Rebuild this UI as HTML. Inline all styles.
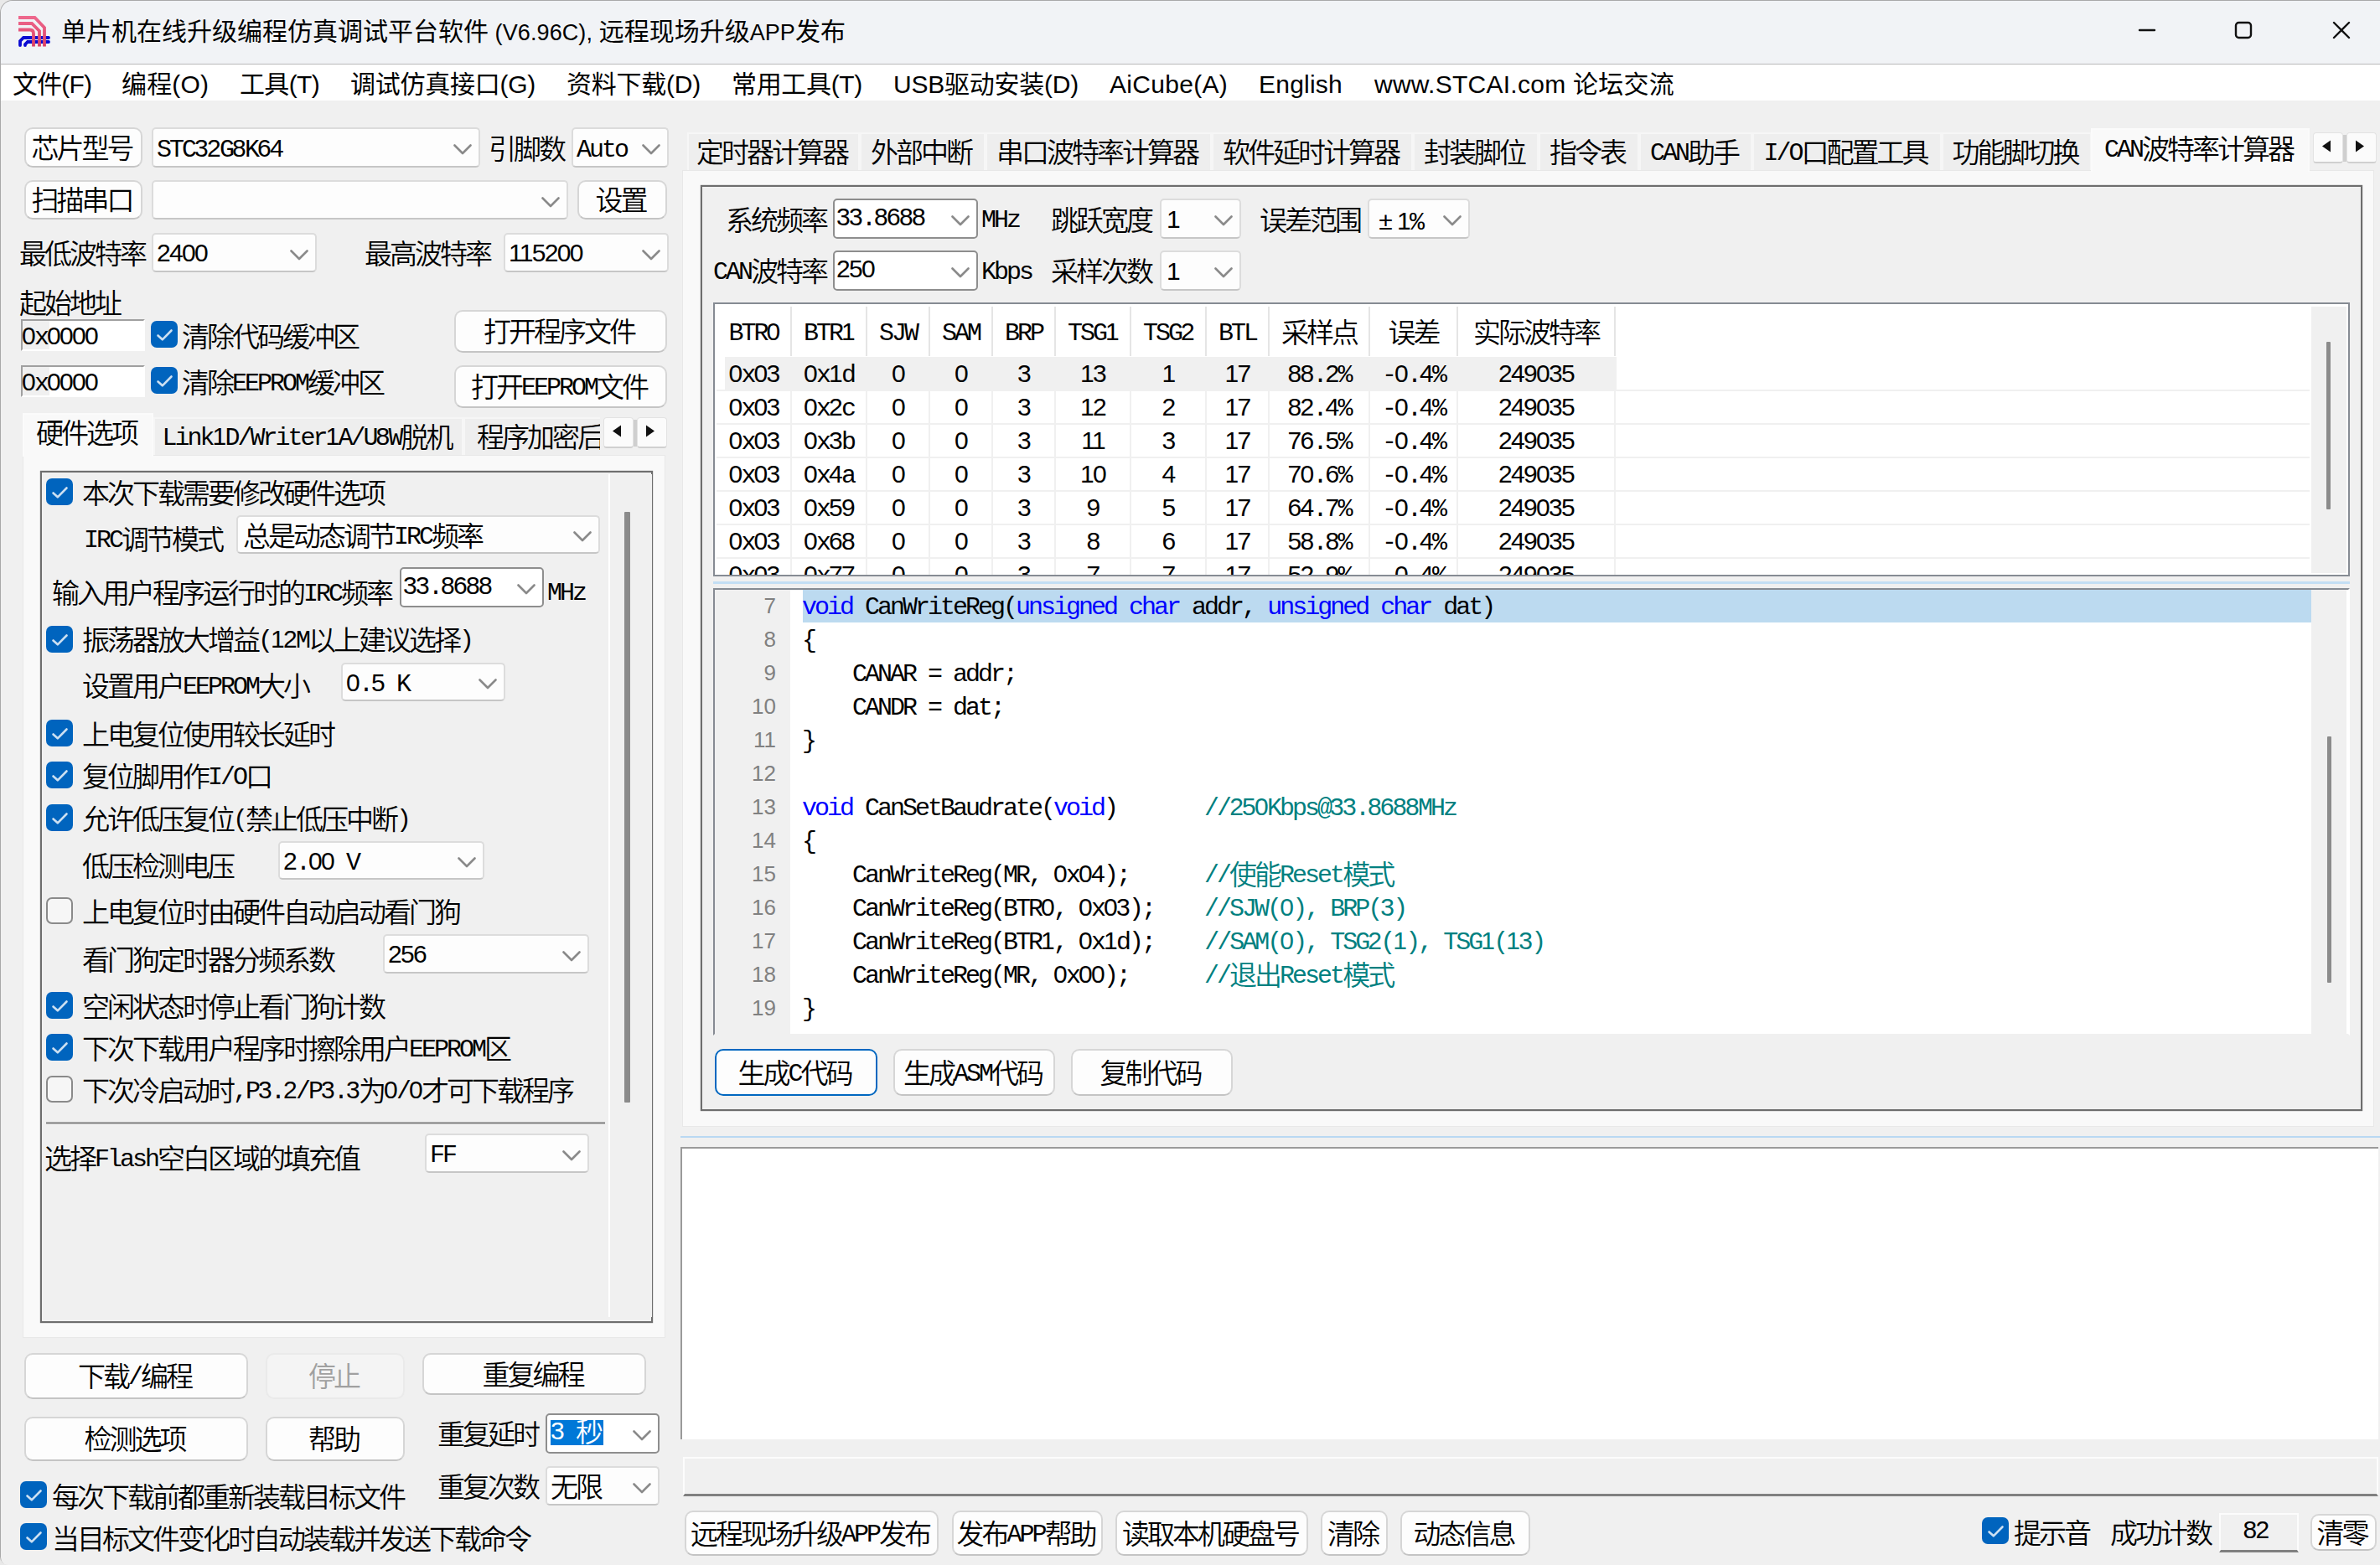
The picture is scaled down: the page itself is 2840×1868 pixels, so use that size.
<!DOCTYPE html>
<html lang="zh-CN"><head><meta charset="utf-8"><title>STC-ISP</title><style>
html,body{margin:0;padding:0}
html{background:#e9e9e9}
body{position:relative;width:2840px;height:1868px;overflow:hidden;background:#f0f0f0;border-radius:15px 0 0 10px;
 font-family:"Liberation Mono","Noto Sans CJK SC",monospace;font-size:33px;font-weight:350;letter-spacing:-3px;color:#000;box-shadow:inset 1px 1px 0 0 #a9a9a9}
div{white-space:pre}
.ui{font-family:"Liberation Sans","Noto Sans CJK SC",sans-serif;font-size:30px;font-weight:400;letter-spacing:0}
#title{position:absolute;left:1px;top:1px;width:2839px;height:75px;background:#f1f3f6;border-bottom:1px solid #b9b9b9;border-radius:14px 0 0 0}
#logo{position:absolute;left:20px;top:18px}
#ttext{position:absolute;left:73px;top:16px;height:44px;line-height:44px}
#menu{position:absolute;left:1px;top:77px;width:2839px;height:43px;background:#fff}
.tl{font-size:27px;letter-spacing:0.1px}
.mi{position:absolute;top:79px;height:44px;line-height:44px}
.t{position:absolute}
.a{font-family:"Liberation Mono",monospace;font-size:30px;position:relative;top:-3px}
.btn{position:absolute;box-sizing:border-box;background:#fdfdfd;border:2px solid #d6d6d6;border-bottom-color:#c4c4c4;border-radius:10px;text-align:center;padding-right:4px}
.btn.dis{color:#a0a0a0;background:#f4f4f4;border-color:#eaeaea}
.btn.def{border-color:#0067c0}
.cbo,.cbe{position:absolute;box-sizing:border-box;background:#fdfdfd;border:2px solid #dcdcdc;border-bottom-color:#c6c6c6;border-radius:5px}
.cbe{background:#fff;border:2px solid #8e8e8e;border-radius:5px}
.cbo i,.cbe i{position:absolute;top:50%;margin-top:-4px;height:13px;line-height:0}
.sel{display:inline-block;height:30px;line-height:35px;overflow:hidden;vertical-align:top;margin-top:6px;margin-left:2px;background:#0078d7;color:#fff;padding-right:3px}
.cb{position:absolute;width:32px;height:32px;box-sizing:border-box;border-radius:7px;border:2px solid #8a8a8a;background:#f6f6f6}
.cb.on{border:none;background:#0064be}
.cb svg{display:block}
.edit{position:absolute;box-sizing:border-box;background:#fff;border:2px solid #a0a0a0;border-right-color:#fff;border-bottom-color:#fff;padding-left:1px}
.edit b{position:absolute;left:0;top:0;width:32px;height:100%;background:#f0f0f0}
.edit>span{position:relative;left:-2px}
.tab{position:absolute;box-sizing:border-box;background:#eeeeee;border:2px solid #f6f6f6;border-bottom:none;text-align:center;overflow:hidden;padding-right:4px}
.tab.tsel{background:#f9f9f9;border-color:#fbfbfb}
.arr{position:absolute;box-sizing:border-box;background:#fbfbfb;border:1px solid #e3e3e3;border-bottom:2px solid #d0d0d0;border-radius:4px}
.arr svg{position:absolute;left:50%;top:50%;margin:-9px 0 0 -8px}
.z{font-family:"Liberation Sans",sans-serif;letter-spacing:-1.7px;line-height:0}
.pm{display:inline-block;width:27px;text-align:center;letter-spacing:0;font-family:"Liberation Sans",sans-serif;font-size:30px;position:relative;top:-3px}
.k{color:#0000ff}.c{color:#008080}
.ln{position:absolute;left:0;width:73px;height:40px;line-height:40px;text-align:right;font-family:"Liberation Sans",sans-serif;font-size:26px;letter-spacing:0;color:#808080}
</style></head><body>
<div id="title"></div>
<svg id="logo" width="40" height="38" viewBox="20 18 40 38">
<g fill="none" stroke-width="3.8" stroke-linejoin="miter">
<g stroke="#0a0ad2" stroke-linecap="round"><path d="M58 45 H28 L24 49 V54"/><path d="M58 50 H33 L30 53 V54"/></g>
<defs><linearGradient id="lg" gradientUnits="userSpaceOnUse" x1="0" y1="19" x2="0" y2="56"><stop offset="0" stop-color="#ee6a8f"/><stop offset="1" stop-color="#dc3e63"/></linearGradient></defs><g stroke="url(#lg)"><path d="M22 21 H41.5 L53 33 V55.5"/><path d="M22 28 H38 L47 37 V55.5"/><path d="M22 35.5 H35.5 Q40 35.5 40 40 V55.5"/></g>
</g></svg>
<div class="ui" id="ttext">单片机在线升级编程仿真调试平台软件<span class="tl"> (V6.96C), </span>远程现场升级<span class="tl">APP</span>发布</div>
<svg style="position:absolute;left:2540px;top:20px" width="280" height="34" viewBox="2540 20 280 34" fill="none" stroke="#111" stroke-width="2.4" stroke-linecap="round">
<path d="M2553 36 H2571"/><rect x="2668" y="27" width="18" height="18" rx="3.5"/><path d="M2785 27 L2803 45 M2803 27 L2785 45"/></svg>
<div id="menu"></div>
<div class="ui mi" style="left:15px;letter-spacing:-0.86px">文件(F)</div>
<div class="ui mi" style="left:145px;letter-spacing:0.14px">编程(O)</div>
<div class="ui mi" style="left:286px;letter-spacing:-0.66px">工具(T)</div>
<div class="ui mi" style="left:418px;letter-spacing:-0.26px">调试仿真接口(G)</div>
<div class="ui mi" style="left:676px;letter-spacing:-0.24px">资料下载(D)</div>
<div class="ui mi" style="left:873px;letter-spacing:-0.33px">常用工具(T)</div>
<div class="ui mi" style="left:1066px;letter-spacing:-0.23px">USB驱动安装(D)</div>
<div class="ui mi" style="left:1324px;letter-spacing:0.29px">AiCube(A)</div>
<div class="ui mi" style="left:1502px;letter-spacing:0.23px">English</div>
<div class="ui mi" style="left:1640px;letter-spacing:0.26px">www.STCAI.com 论坛交流</div>
<div class="btn " style="left:29px;top:152px;width:141px;height:48px;line-height:53px">芯片型号</div>
<div class="cbo" style="left:181px;top:152px;width:392px;height:48px;line-height:55px;padding-left:4px"><span class="a">STC<span class="z">32</span>G<span class="z">8</span>K<span class="z">64</span></span><i style="right:8px"><svg class="chev" width="22" height="13" viewBox="0 0 22 13"><path d="M1.5 1.5 L11 11 L20.5 1.5" fill="none" stroke="#8a8a8a" stroke-width="2.6" stroke-linecap="round" stroke-linejoin="round"/></svg></i></div>
<div class="t " style="left:583px;top:162px;height:40px;line-height:40px;">引脚数</div>
<div class="cbo" style="left:682px;top:152px;width:116px;height:48px;line-height:55px;padding-left:4px"><span class="a">Auto</span><i style="right:8px"><svg class="chev" width="22" height="13" viewBox="0 0 22 13"><path d="M1.5 1.5 L11 11 L20.5 1.5" fill="none" stroke="#8a8a8a" stroke-width="2.6" stroke-linecap="round" stroke-linejoin="round"/></svg></i></div>
<div class="btn " style="left:29px;top:215px;width:141px;height:47px;line-height:52px">扫描串口</div>
<div class="cbo" style="left:181px;top:215px;width:497px;height:47px;line-height:54px;padding-left:4px"><i style="right:8px"><svg class="chev" width="22" height="13" viewBox="0 0 22 13"><path d="M1.5 1.5 L11 11 L20.5 1.5" fill="none" stroke="#8a8a8a" stroke-width="2.6" stroke-linecap="round" stroke-linejoin="round"/></svg></i></div>
<div class="btn " style="left:689px;top:215px;width:107px;height:47px;line-height:52px">设置</div>
<div class="t " style="left:23px;top:287px;height:40px;line-height:40px;">最低波特率</div>
<div class="cbo" style="left:181px;top:278px;width:197px;height:47px;line-height:54px;padding-left:4px"><span class="a"><span class="z">2400</span></span><i style="right:8px"><svg class="chev" width="22" height="13" viewBox="0 0 22 13"><path d="M1.5 1.5 L11 11 L20.5 1.5" fill="none" stroke="#8a8a8a" stroke-width="2.6" stroke-linecap="round" stroke-linejoin="round"/></svg></i></div>
<div class="t " style="left:435px;top:287px;height:40px;line-height:40px;">最高波特率</div>
<div class="cbo" style="left:601px;top:278px;width:197px;height:47px;line-height:54px;padding-left:4px"><span class="a"><span class="z">115200</span></span><i style="right:8px"><svg class="chev" width="22" height="13" viewBox="0 0 22 13"><path d="M1.5 1.5 L11 11 L20.5 1.5" fill="none" stroke="#8a8a8a" stroke-width="2.6" stroke-linecap="round" stroke-linejoin="round"/></svg></i></div>
<div class="t " style="left:23px;top:346px;height:40px;line-height:40px;">起始地址</div>
<div class="edit" style="left:25px;top:381px;width:148px;height:38px;line-height:45px"><b></b><span><span class="a"><span class="z">0</span>x<span class="z">0000</span></span></span></div>
<div class="cb on" style="left:180px;top:383px"><svg width="32" height="32" viewBox="0 0 32 32"><path d="M8.5 17.5 L13.8 22.3 L24.5 11.5" fill="none" stroke="#fff" stroke-opacity=".8" stroke-width="2.6" stroke-linecap="round" stroke-linejoin="round"/></svg></div>
<div class="t " style="left:217px;top:386px;height:40px;line-height:40px;">清除代码缓冲区</div>
<div class="btn " style="left:542px;top:370px;width:254px;height:51px;line-height:56px">打开程序文件</div>
<div class="edit" style="left:25px;top:436px;width:148px;height:38px;line-height:45px"><b></b><span><span class="a"><span class="z">0</span>x<span class="z">0000</span></span></span></div>
<div class="cb on" style="left:180px;top:438px"><svg width="32" height="32" viewBox="0 0 32 32"><path d="M8.5 17.5 L13.8 22.3 L24.5 11.5" fill="none" stroke="#fff" stroke-opacity=".8" stroke-width="2.6" stroke-linecap="round" stroke-linejoin="round"/></svg></div>
<div class="t " style="left:217px;top:441px;height:40px;line-height:40px;">清除<span class="a">EEPROM</span>缓冲区</div>
<div class="btn " style="left:542px;top:436px;width:254px;height:51px;line-height:56px">打开<span class="a">EEPROM</span>文件</div>
<div style="position:absolute;left:27px;top:543px;width:767px;height:1054px;background:#f9f9f9;border:1px solid #e8e8e8;box-sizing:border-box"></div>
<div class="tab" style="left:183px;top:498px;width:370px;height:45px;line-height:51px;"><span class="a">Link<span class="z">1</span>D/Writer<span class="z">1</span>A/U<span class="z">8</span>W</span>脱机</div>
<div class="tab" style="left:553px;top:498px;width:207px;height:45px;line-height:51px;text-align:left;padding-left:14px">程序加密后传输</div>
<div style="position:absolute;left:716px;top:490px;width:84px;height:53px;background:#f0f0f0"></div>
<div class="tab tsel" style="left:27px;top:493px;width:156px;height:52px;line-height:51px;">硬件选项</div>
<div style="position:absolute;left:754px;top:501px;width:7px;height:32px;background:#cfcfcf"></div>
<div class="arr" style="left:720px;top:498px;width:36px;height:37px"><svg width="12" height="15" viewBox="0 0 12 15"><path d="M11 0.5 V14.5 L1 7.5Z" fill="#111"/></svg></div>
<div class="arr" style="left:760px;top:498px;width:36px;height:37px"><svg width="12" height="15" viewBox="0 0 12 15"><path d="M1 0.5 V14.5 L11 7.5Z" fill="#111"/></svg></div>
<div style="position:absolute;left:48px;top:562px;width:731px;height:1017px;background:#f0f0f0;border:2px solid #6e6e6e;box-sizing:border-box;box-shadow:0 0 1px #6e6e6e"></div>
<div style="position:absolute;left:726px;top:566px;width:50px;height:1006px;background:#f0f0f0;border-left:2px solid #fff"></div>
<div style="position:absolute;left:745px;top:611px;width:7px;height:705px;background:#8b8b8b;border-radius:1px"></div>
<div class="cb on" style="left:55px;top:571px"><svg width="32" height="32" viewBox="0 0 32 32"><path d="M8.5 17.5 L13.8 22.3 L24.5 11.5" fill="none" stroke="#fff" stroke-opacity=".8" stroke-width="2.6" stroke-linecap="round" stroke-linejoin="round"/></svg></div>
<div class="t " style="left:98px;top:573px;height:40px;line-height:40px;">本次下载需要修改硬件选项</div>
<div class="t " style="left:100px;top:628px;height:40px;line-height:40px;"><span class="a">IRC</span>调节模式</div>
<div class="cbo" style="left:282px;top:615px;width:434px;height:46px;line-height:53px;padding-left:6px">总是动态调节<span class="a">IRC</span>频率<i style="right:8px"><svg class="chev" width="22" height="13" viewBox="0 0 22 13"><path d="M1.5 1.5 L11 11 L20.5 1.5" fill="none" stroke="#8a8a8a" stroke-width="2.6" stroke-linecap="round" stroke-linejoin="round"/></svg></i></div>
<div class="t " style="left:62px;top:692px;height:40px;line-height:40px;">输入用户程序运行时的<span class="a">IRC</span>频率</div>
<div class="cbe" style="left:477px;top:677px;width:172px;height:48px;line-height:49px;padding-left:2px"><span class="a"><span class="z">33</span>.<span class="z">8688</span></span><i style="right:8px"><svg class="chev" width="22" height="13" viewBox="0 0 22 13"><path d="M1.5 1.5 L11 11 L20.5 1.5" fill="none" stroke="#8a8a8a" stroke-width="2.6" stroke-linecap="round" stroke-linejoin="round"/></svg></i></div>
<div class="t " style="left:653px;top:691px;height:40px;line-height:40px;"><span class="a">MHz</span></div>
<div class="cb on" style="left:55px;top:747px"><svg width="32" height="32" viewBox="0 0 32 32"><path d="M8.5 17.5 L13.8 22.3 L24.5 11.5" fill="none" stroke="#fff" stroke-opacity=".8" stroke-width="2.6" stroke-linecap="round" stroke-linejoin="round"/></svg></div>
<div class="t " style="left:98px;top:748px;height:40px;line-height:40px;">振荡器放大增益<span class="a">(<span class="z">12</span>M</span>以上建议选择<span class="a">)</span></div>
<div class="t " style="left:98px;top:803px;height:40px;line-height:40px;">设置用户<span class="a">EEPROM</span>大小</div>
<div class="cbo" style="left:407px;top:791px;width:196px;height:46px;line-height:53px;padding-left:4px"><span class="a"><span class="z">0</span>.<span class="z">5</span> K</span><i style="right:8px"><svg class="chev" width="22" height="13" viewBox="0 0 22 13"><path d="M1.5 1.5 L11 11 L20.5 1.5" fill="none" stroke="#8a8a8a" stroke-width="2.6" stroke-linecap="round" stroke-linejoin="round"/></svg></i></div>
<div class="cb on" style="left:55px;top:859px"><svg width="32" height="32" viewBox="0 0 32 32"><path d="M8.5 17.5 L13.8 22.3 L24.5 11.5" fill="none" stroke="#fff" stroke-opacity=".8" stroke-width="2.6" stroke-linecap="round" stroke-linejoin="round"/></svg></div>
<div class="t " style="left:98px;top:861px;height:40px;line-height:40px;">上电复位使用较长延时</div>
<div class="cb on" style="left:55px;top:909px"><svg width="32" height="32" viewBox="0 0 32 32"><path d="M8.5 17.5 L13.8 22.3 L24.5 11.5" fill="none" stroke="#fff" stroke-opacity=".8" stroke-width="2.6" stroke-linecap="round" stroke-linejoin="round"/></svg></div>
<div class="t " style="left:98px;top:911px;height:40px;line-height:40px;">复位脚用作<span class="a">I/O</span>口</div>
<div class="cb on" style="left:55px;top:960px"><svg width="32" height="32" viewBox="0 0 32 32"><path d="M8.5 17.5 L13.8 22.3 L24.5 11.5" fill="none" stroke="#fff" stroke-opacity=".8" stroke-width="2.6" stroke-linecap="round" stroke-linejoin="round"/></svg></div>
<div class="t " style="left:98px;top:962px;height:40px;line-height:40px;">允许低压复位<span class="a">(</span>禁止低压中断<span class="a">)</span></div>
<div class="t " style="left:98px;top:1018px;height:40px;line-height:40px;">低压检测电压</div>
<div class="cbo" style="left:332px;top:1004px;width:246px;height:46px;line-height:53px;padding-left:4px"><span class="a"><span class="z">2</span>.<span class="z">00</span> V</span><i style="right:8px"><svg class="chev" width="22" height="13" viewBox="0 0 22 13"><path d="M1.5 1.5 L11 11 L20.5 1.5" fill="none" stroke="#8a8a8a" stroke-width="2.6" stroke-linecap="round" stroke-linejoin="round"/></svg></i></div>
<div class="cb" style="left:55px;top:1071px"></div>
<div class="t " style="left:98px;top:1073px;height:40px;line-height:40px;">上电复位时由硬件自动启动看门狗</div>
<div class="t " style="left:98px;top:1130px;height:40px;line-height:40px;">看门狗定时器分频系数</div>
<div class="cbo" style="left:457px;top:1115px;width:246px;height:47px;line-height:54px;padding-left:4px"><span class="a"><span class="z">256</span></span><i style="right:8px"><svg class="chev" width="22" height="13" viewBox="0 0 22 13"><path d="M1.5 1.5 L11 11 L20.5 1.5" fill="none" stroke="#8a8a8a" stroke-width="2.6" stroke-linecap="round" stroke-linejoin="round"/></svg></i></div>
<div class="cb on" style="left:55px;top:1184px"><svg width="32" height="32" viewBox="0 0 32 32"><path d="M8.5 17.5 L13.8 22.3 L24.5 11.5" fill="none" stroke="#fff" stroke-opacity=".8" stroke-width="2.6" stroke-linecap="round" stroke-linejoin="round"/></svg></div>
<div class="t " style="left:98px;top:1186px;height:40px;line-height:40px;">空闲状态时停止看门狗计数</div>
<div class="cb on" style="left:55px;top:1234px"><svg width="32" height="32" viewBox="0 0 32 32"><path d="M8.5 17.5 L13.8 22.3 L24.5 11.5" fill="none" stroke="#fff" stroke-opacity=".8" stroke-width="2.6" stroke-linecap="round" stroke-linejoin="round"/></svg></div>
<div class="t " style="left:98px;top:1236px;height:40px;line-height:40px;">下次下载用户程序时擦除用户<span class="a">EEPROM</span>区</div>
<div class="cb" style="left:55px;top:1284px"></div>
<div class="t " style="left:98px;top:1286px;height:40px;line-height:40px;">下次冷启动时<span class="a">,P<span class="z">3</span>.<span class="z">2</span>/P<span class="z">3</span>.<span class="z">3</span></span>为<span class="a"><span class="z">0</span>/<span class="z">0</span></span>才可下载程序</div>
<div style="position:absolute;left:55px;top:1339px;width:667px;height:3px;background:#a0a0a0;border-bottom:1px solid #fff"></div>
<div class="t " style="left:53px;top:1367px;height:40px;line-height:40px;">选择<span class="a">Flash</span>空白区域的填充值</div>
<div class="cbo" style="left:507px;top:1353px;width:196px;height:47px;line-height:54px;padding-left:4px"><span class="a">FF</span><i style="right:8px"><svg class="chev" width="22" height="13" viewBox="0 0 22 13"><path d="M1.5 1.5 L11 11 L20.5 1.5" fill="none" stroke="#8a8a8a" stroke-width="2.6" stroke-linecap="round" stroke-linejoin="round"/></svg></i></div>
<div class="btn " style="left:29px;top:1615px;width:267px;height:55px;line-height:60px">下载<span class="a">/</span>编程</div>
<div class="btn dis" style="left:317px;top:1615px;width:166px;height:55px;line-height:60px">停止</div>
<div class="btn " style="left:504px;top:1615px;width:267px;height:50px;line-height:55px">重复编程</div>
<div class="btn " style="left:29px;top:1691px;width:267px;height:53px;line-height:58px">检测选项</div>
<div class="btn " style="left:317px;top:1691px;width:166px;height:53px;line-height:58px">帮助</div>
<div class="t " style="left:522px;top:1696px;height:40px;line-height:40px;">重复延时</div>
<div class="cbe" style="left:651px;top:1687px;width:136px;height:48px;line-height:49px;padding-left:2px"><span class="sel"><span class="a"><span class="z">3</span> </span>秒</span><i style="right:8px"><svg class="chev" width="22" height="13" viewBox="0 0 22 13"><path d="M1.5 1.5 L11 11 L20.5 1.5" fill="none" stroke="#8a8a8a" stroke-width="2.6" stroke-linecap="round" stroke-linejoin="round"/></svg></i></div>
<div class="t " style="left:522px;top:1759px;height:40px;line-height:40px;">重复次数</div>
<div class="cbo" style="left:651px;top:1750px;width:136px;height:47px;line-height:54px;padding-left:4px">无限<i style="right:8px"><svg class="chev" width="22" height="13" viewBox="0 0 22 13"><path d="M1.5 1.5 L11 11 L20.5 1.5" fill="none" stroke="#8a8a8a" stroke-width="2.6" stroke-linecap="round" stroke-linejoin="round"/></svg></i></div>
<div class="cb on" style="left:24px;top:1768px"><svg width="32" height="32" viewBox="0 0 32 32"><path d="M8.5 17.5 L13.8 22.3 L24.5 11.5" fill="none" stroke="#fff" stroke-opacity=".8" stroke-width="2.6" stroke-linecap="round" stroke-linejoin="round"/></svg></div>
<div class="t " style="left:62px;top:1771px;height:40px;line-height:40px;">每次下载前都重新装载目标文件</div>
<div class="cb on" style="left:24px;top:1818px"><svg width="32" height="32" viewBox="0 0 32 32"><path d="M8.5 17.5 L13.8 22.3 L24.5 11.5" fill="none" stroke="#fff" stroke-opacity=".8" stroke-width="2.6" stroke-linecap="round" stroke-linejoin="round"/></svg></div>
<div class="t " style="left:62px;top:1821px;height:40px;line-height:40px;">当目标文件变化时自动装载并发送下载命令</div>
<div style="position:absolute;left:814px;top:203px;width:2019px;height:1142px;background:#f9f9f9;border:1px solid #e8e8e8;box-sizing:border-box"></div>
<div class="tab" style="left:820px;top:158px;width:206px;height:45px;line-height:51px;">定时器计算器</div>
<div class="tab" style="left:1026px;top:158px;width:150px;height:45px;line-height:51px;">外部中断</div>
<div class="tab" style="left:1176px;top:158px;width:270px;height:45px;line-height:51px;">串口波特率计算器</div>
<div class="tab" style="left:1446px;top:158px;width:240px;height:45px;line-height:51px;">软件延时计算器</div>
<div class="tab" style="left:1686px;top:158px;width:150px;height:45px;line-height:51px;">封装脚位</div>
<div class="tab" style="left:1836px;top:158px;width:120px;height:45px;line-height:51px;">指令表</div>
<div class="tab" style="left:1956px;top:158px;width:135px;height:45px;line-height:51px;"><span class="a">CAN</span>助手</div>
<div class="tab" style="left:2091px;top:158px;width:226px;height:45px;line-height:51px;"><span class="a">I/O</span>口配置工具</div>
<div class="tab" style="left:2317px;top:158px;width:179px;height:45px;line-height:51px;">功能脚切换</div>
<div class="tab tsel" style="left:2495px;top:153px;width:261px;height:52px;line-height:53px;"><span class="a">CAN</span>波特率计算器</div>
<div style="position:absolute;left:2794px;top:161px;width:7px;height:32px;background:#cfcfcf"></div>
<div class="arr" style="left:2760px;top:158px;width:36px;height:37px"><svg width="12" height="15" viewBox="0 0 12 15"><path d="M11 0.5 V14.5 L1 7.5Z" fill="#111"/></svg></div>
<div class="arr" style="left:2800px;top:158px;width:36px;height:37px"><svg width="12" height="15" viewBox="0 0 12 15"><path d="M1 0.5 V14.5 L11 7.5Z" fill="#111"/></svg></div>
<div style="position:absolute;left:836px;top:221px;width:1983px;height:1105px;background:#f0f0f0;border:2px solid #6e6e6e;box-sizing:border-box;box-shadow:0 0 1px #6e6e6e"></div>
<div class="t " style="left:866px;top:247px;height:40px;line-height:40px;">系统频率</div>
<div class="cbe" style="left:994px;top:237px;width:173px;height:48px;line-height:49px;padding-left:2px"><span class="a"><span class="z">33</span>.<span class="z">8688</span></span><i style="right:8px"><svg class="chev" width="22" height="13" viewBox="0 0 22 13"><path d="M1.5 1.5 L11 11 L20.5 1.5" fill="none" stroke="#8a8a8a" stroke-width="2.6" stroke-linecap="round" stroke-linejoin="round"/></svg></i></div>
<div class="t " style="left:1171px;top:246px;height:40px;line-height:40px;"><span class="a">MHz</span></div>
<div class="t " style="left:1254px;top:247px;height:40px;line-height:40px;">跳跃宽度</div>
<div class="cbo" style="left:1384px;top:237px;width:97px;height:48px;line-height:55px;padding-left:6px"><span class="a"><span class="z">1</span></span><i style="right:8px"><svg class="chev" width="22" height="13" viewBox="0 0 22 13"><path d="M1.5 1.5 L11 11 L20.5 1.5" fill="none" stroke="#8a8a8a" stroke-width="2.6" stroke-linecap="round" stroke-linejoin="round"/></svg></i></div>
<div class="t " style="left:1503px;top:247px;height:40px;line-height:40px;">误差范围</div>
<div class="cbo" style="left:1632px;top:237px;width:122px;height:48px;line-height:55px;padding-left:6px"><span class="pm">±</span><span class="a"><span class="z">1</span>%</span><i style="right:8px"><svg class="chev" width="22" height="13" viewBox="0 0 22 13"><path d="M1.5 1.5 L11 11 L20.5 1.5" fill="none" stroke="#8a8a8a" stroke-width="2.6" stroke-linecap="round" stroke-linejoin="round"/></svg></i></div>
<div class="t " style="left:851px;top:308px;height:40px;line-height:40px;"><span class="a">CAN</span>波特率</div>
<div class="cbe" style="left:994px;top:299px;width:173px;height:48px;line-height:49px;padding-left:2px"><span class="a"><span class="z">250</span></span><i style="right:8px"><svg class="chev" width="22" height="13" viewBox="0 0 22 13"><path d="M1.5 1.5 L11 11 L20.5 1.5" fill="none" stroke="#8a8a8a" stroke-width="2.6" stroke-linecap="round" stroke-linejoin="round"/></svg></i></div>
<div class="t " style="left:1171px;top:308px;height:40px;line-height:40px;"><span class="a">Kbps</span></div>
<div class="t " style="left:1254px;top:308px;height:40px;line-height:40px;">采样次数</div>
<div class="cbo" style="left:1384px;top:299px;width:97px;height:48px;line-height:55px;padding-left:6px"><span class="a"><span class="z">1</span></span><i style="right:8px"><svg class="chev" width="22" height="13" viewBox="0 0 22 13"><path d="M1.5 1.5 L11 11 L20.5 1.5" fill="none" stroke="#8a8a8a" stroke-width="2.6" stroke-linecap="round" stroke-linejoin="round"/></svg></i></div>
<div style="position:absolute;left:851px;top:361px;width:1953px;height:327px;background:#fff;border:2px solid #868b93;box-sizing:border-box;overflow:hidden"><div style="position:absolute;left:12px;top:63px;width:1064px;height:40px;background:#f0f0f0"></div><div style="position:absolute;left:2px;top:102px;width:1901px;height:2px;background:#f0f0f0"></div><div style="position:absolute;left:2px;top:142px;width:1901px;height:2px;background:#f0f0f0"></div><div style="position:absolute;left:2px;top:182px;width:1901px;height:2px;background:#f0f0f0"></div><div style="position:absolute;left:2px;top:222px;width:1901px;height:2px;background:#f0f0f0"></div><div style="position:absolute;left:2px;top:262px;width:1901px;height:2px;background:#f0f0f0"></div><div style="position:absolute;left:2px;top:302px;width:1901px;height:2px;background:#f0f0f0"></div><div style="position:absolute;left:2px;top:342px;width:1901px;height:2px;background:#f0f0f0"></div><div style="position:absolute;left:90px;top:63px;width:2px;height:260px;background:#f0f0f0"></div><div style="position:absolute;left:90px;top:3px;width:2px;height:59px;background:#e5e5e5"></div><div class="t" style="left:2px;top:18px;width:89px;height:40px;line-height:40px;text-align:center"><span class="a">BTR<span class="z">0</span></span></div><div class="t" style="left:2px;top:68px;width:89px;height:40px;line-height:40px;text-align:center"><span class="a"><span class="z">0</span>x<span class="z">03</span></span></div><div class="t" style="left:2px;top:108px;width:89px;height:40px;line-height:40px;text-align:center"><span class="a"><span class="z">0</span>x<span class="z">03</span></span></div><div class="t" style="left:2px;top:148px;width:89px;height:40px;line-height:40px;text-align:center"><span class="a"><span class="z">0</span>x<span class="z">03</span></span></div><div class="t" style="left:2px;top:188px;width:89px;height:40px;line-height:40px;text-align:center"><span class="a"><span class="z">0</span>x<span class="z">03</span></span></div><div class="t" style="left:2px;top:228px;width:89px;height:40px;line-height:40px;text-align:center"><span class="a"><span class="z">0</span>x<span class="z">03</span></span></div><div class="t" style="left:2px;top:268px;width:89px;height:40px;line-height:40px;text-align:center"><span class="a"><span class="z">0</span>x<span class="z">03</span></span></div><div class="t" style="left:2px;top:308px;width:89px;height:40px;line-height:40px;text-align:center"><span class="a"><span class="z">0</span>x<span class="z">03</span></span></div><div style="position:absolute;left:180px;top:63px;width:2px;height:260px;background:#f0f0f0"></div><div style="position:absolute;left:180px;top:3px;width:2px;height:59px;background:#e5e5e5"></div><div class="t" style="left:91px;top:18px;width:90px;height:40px;line-height:40px;text-align:center"><span class="a">BTR<span class="z">1</span></span></div><div class="t" style="left:91px;top:68px;width:90px;height:40px;line-height:40px;text-align:center"><span class="a"><span class="z">0</span>x<span class="z">1</span>d</span></div><div class="t" style="left:91px;top:108px;width:90px;height:40px;line-height:40px;text-align:center"><span class="a"><span class="z">0</span>x<span class="z">2</span>c</span></div><div class="t" style="left:91px;top:148px;width:90px;height:40px;line-height:40px;text-align:center"><span class="a"><span class="z">0</span>x<span class="z">3</span>b</span></div><div class="t" style="left:91px;top:188px;width:90px;height:40px;line-height:40px;text-align:center"><span class="a"><span class="z">0</span>x<span class="z">4</span>a</span></div><div class="t" style="left:91px;top:228px;width:90px;height:40px;line-height:40px;text-align:center"><span class="a"><span class="z">0</span>x<span class="z">59</span></span></div><div class="t" style="left:91px;top:268px;width:90px;height:40px;line-height:40px;text-align:center"><span class="a"><span class="z">0</span>x<span class="z">68</span></span></div><div class="t" style="left:91px;top:308px;width:90px;height:40px;line-height:40px;text-align:center"><span class="a"><span class="z">0</span>x<span class="z">77</span></span></div><div style="position:absolute;left:255px;top:63px;width:2px;height:260px;background:#f0f0f0"></div><div style="position:absolute;left:255px;top:3px;width:2px;height:59px;background:#e5e5e5"></div><div class="t" style="left:181px;top:18px;width:75px;height:40px;line-height:40px;text-align:center"><span class="a">SJW</span></div><div class="t" style="left:181px;top:68px;width:75px;height:40px;line-height:40px;text-align:center"><span class="a"><span class="z">0</span></span></div><div class="t" style="left:181px;top:108px;width:75px;height:40px;line-height:40px;text-align:center"><span class="a"><span class="z">0</span></span></div><div class="t" style="left:181px;top:148px;width:75px;height:40px;line-height:40px;text-align:center"><span class="a"><span class="z">0</span></span></div><div class="t" style="left:181px;top:188px;width:75px;height:40px;line-height:40px;text-align:center"><span class="a"><span class="z">0</span></span></div><div class="t" style="left:181px;top:228px;width:75px;height:40px;line-height:40px;text-align:center"><span class="a"><span class="z">0</span></span></div><div class="t" style="left:181px;top:268px;width:75px;height:40px;line-height:40px;text-align:center"><span class="a"><span class="z">0</span></span></div><div class="t" style="left:181px;top:308px;width:75px;height:40px;line-height:40px;text-align:center"><span class="a"><span class="z">0</span></span></div><div style="position:absolute;left:330px;top:63px;width:2px;height:260px;background:#f0f0f0"></div><div style="position:absolute;left:330px;top:3px;width:2px;height:59px;background:#e5e5e5"></div><div class="t" style="left:256px;top:18px;width:75px;height:40px;line-height:40px;text-align:center"><span class="a">SAM</span></div><div class="t" style="left:256px;top:68px;width:75px;height:40px;line-height:40px;text-align:center"><span class="a"><span class="z">0</span></span></div><div class="t" style="left:256px;top:108px;width:75px;height:40px;line-height:40px;text-align:center"><span class="a"><span class="z">0</span></span></div><div class="t" style="left:256px;top:148px;width:75px;height:40px;line-height:40px;text-align:center"><span class="a"><span class="z">0</span></span></div><div class="t" style="left:256px;top:188px;width:75px;height:40px;line-height:40px;text-align:center"><span class="a"><span class="z">0</span></span></div><div class="t" style="left:256px;top:228px;width:75px;height:40px;line-height:40px;text-align:center"><span class="a"><span class="z">0</span></span></div><div class="t" style="left:256px;top:268px;width:75px;height:40px;line-height:40px;text-align:center"><span class="a"><span class="z">0</span></span></div><div class="t" style="left:256px;top:308px;width:75px;height:40px;line-height:40px;text-align:center"><span class="a"><span class="z">0</span></span></div><div style="position:absolute;left:405px;top:63px;width:2px;height:260px;background:#f0f0f0"></div><div style="position:absolute;left:405px;top:3px;width:2px;height:59px;background:#e5e5e5"></div><div class="t" style="left:331px;top:18px;width:75px;height:40px;line-height:40px;text-align:center"><span class="a">BRP</span></div><div class="t" style="left:331px;top:68px;width:75px;height:40px;line-height:40px;text-align:center"><span class="a"><span class="z">3</span></span></div><div class="t" style="left:331px;top:108px;width:75px;height:40px;line-height:40px;text-align:center"><span class="a"><span class="z">3</span></span></div><div class="t" style="left:331px;top:148px;width:75px;height:40px;line-height:40px;text-align:center"><span class="a"><span class="z">3</span></span></div><div class="t" style="left:331px;top:188px;width:75px;height:40px;line-height:40px;text-align:center"><span class="a"><span class="z">3</span></span></div><div class="t" style="left:331px;top:228px;width:75px;height:40px;line-height:40px;text-align:center"><span class="a"><span class="z">3</span></span></div><div class="t" style="left:331px;top:268px;width:75px;height:40px;line-height:40px;text-align:center"><span class="a"><span class="z">3</span></span></div><div class="t" style="left:331px;top:308px;width:75px;height:40px;line-height:40px;text-align:center"><span class="a"><span class="z">3</span></span></div><div style="position:absolute;left:495px;top:63px;width:2px;height:260px;background:#f0f0f0"></div><div style="position:absolute;left:495px;top:3px;width:2px;height:59px;background:#e5e5e5"></div><div class="t" style="left:406px;top:18px;width:90px;height:40px;line-height:40px;text-align:center"><span class="a">TSG<span class="z">1</span></span></div><div class="t" style="left:406px;top:68px;width:90px;height:40px;line-height:40px;text-align:center"><span class="a"><span class="z">13</span></span></div><div class="t" style="left:406px;top:108px;width:90px;height:40px;line-height:40px;text-align:center"><span class="a"><span class="z">12</span></span></div><div class="t" style="left:406px;top:148px;width:90px;height:40px;line-height:40px;text-align:center"><span class="a"><span class="z">11</span></span></div><div class="t" style="left:406px;top:188px;width:90px;height:40px;line-height:40px;text-align:center"><span class="a"><span class="z">10</span></span></div><div class="t" style="left:406px;top:228px;width:90px;height:40px;line-height:40px;text-align:center"><span class="a"><span class="z">9</span></span></div><div class="t" style="left:406px;top:268px;width:90px;height:40px;line-height:40px;text-align:center"><span class="a"><span class="z">8</span></span></div><div class="t" style="left:406px;top:308px;width:90px;height:40px;line-height:40px;text-align:center"><span class="a"><span class="z">7</span></span></div><div style="position:absolute;left:585px;top:63px;width:2px;height:260px;background:#f0f0f0"></div><div style="position:absolute;left:585px;top:3px;width:2px;height:59px;background:#e5e5e5"></div><div class="t" style="left:496px;top:18px;width:90px;height:40px;line-height:40px;text-align:center"><span class="a">TSG<span class="z">2</span></span></div><div class="t" style="left:496px;top:68px;width:90px;height:40px;line-height:40px;text-align:center"><span class="a"><span class="z">1</span></span></div><div class="t" style="left:496px;top:108px;width:90px;height:40px;line-height:40px;text-align:center"><span class="a"><span class="z">2</span></span></div><div class="t" style="left:496px;top:148px;width:90px;height:40px;line-height:40px;text-align:center"><span class="a"><span class="z">3</span></span></div><div class="t" style="left:496px;top:188px;width:90px;height:40px;line-height:40px;text-align:center"><span class="a"><span class="z">4</span></span></div><div class="t" style="left:496px;top:228px;width:90px;height:40px;line-height:40px;text-align:center"><span class="a"><span class="z">5</span></span></div><div class="t" style="left:496px;top:268px;width:90px;height:40px;line-height:40px;text-align:center"><span class="a"><span class="z">6</span></span></div><div class="t" style="left:496px;top:308px;width:90px;height:40px;line-height:40px;text-align:center"><span class="a"><span class="z">7</span></span></div><div style="position:absolute;left:660px;top:63px;width:2px;height:260px;background:#f0f0f0"></div><div style="position:absolute;left:660px;top:3px;width:2px;height:59px;background:#e5e5e5"></div><div class="t" style="left:586px;top:18px;width:75px;height:40px;line-height:40px;text-align:center"><span class="a">BTL</span></div><div class="t" style="left:586px;top:68px;width:75px;height:40px;line-height:40px;text-align:center"><span class="a"><span class="z">17</span></span></div><div class="t" style="left:586px;top:108px;width:75px;height:40px;line-height:40px;text-align:center"><span class="a"><span class="z">17</span></span></div><div class="t" style="left:586px;top:148px;width:75px;height:40px;line-height:40px;text-align:center"><span class="a"><span class="z">17</span></span></div><div class="t" style="left:586px;top:188px;width:75px;height:40px;line-height:40px;text-align:center"><span class="a"><span class="z">17</span></span></div><div class="t" style="left:586px;top:228px;width:75px;height:40px;line-height:40px;text-align:center"><span class="a"><span class="z">17</span></span></div><div class="t" style="left:586px;top:268px;width:75px;height:40px;line-height:40px;text-align:center"><span class="a"><span class="z">17</span></span></div><div class="t" style="left:586px;top:308px;width:75px;height:40px;line-height:40px;text-align:center"><span class="a"><span class="z">17</span></span></div><div style="position:absolute;left:780px;top:63px;width:2px;height:260px;background:#f0f0f0"></div><div style="position:absolute;left:780px;top:3px;width:2px;height:59px;background:#e5e5e5"></div><div class="t" style="left:661px;top:18px;width:120px;height:40px;line-height:40px;text-align:center">采样点</div><div class="t" style="left:661px;top:68px;width:120px;height:40px;line-height:40px;text-align:center"><span class="a"><span class="z">88</span>.<span class="z">2</span>%</span></div><div class="t" style="left:661px;top:108px;width:120px;height:40px;line-height:40px;text-align:center"><span class="a"><span class="z">82</span>.<span class="z">4</span>%</span></div><div class="t" style="left:661px;top:148px;width:120px;height:40px;line-height:40px;text-align:center"><span class="a"><span class="z">76</span>.<span class="z">5</span>%</span></div><div class="t" style="left:661px;top:188px;width:120px;height:40px;line-height:40px;text-align:center"><span class="a"><span class="z">70</span>.<span class="z">6</span>%</span></div><div class="t" style="left:661px;top:228px;width:120px;height:40px;line-height:40px;text-align:center"><span class="a"><span class="z">64</span>.<span class="z">7</span>%</span></div><div class="t" style="left:661px;top:268px;width:120px;height:40px;line-height:40px;text-align:center"><span class="a"><span class="z">58</span>.<span class="z">8</span>%</span></div><div class="t" style="left:661px;top:308px;width:120px;height:40px;line-height:40px;text-align:center"><span class="a"><span class="z">52</span>.<span class="z">9</span>%</span></div><div style="position:absolute;left:885px;top:63px;width:2px;height:260px;background:#f0f0f0"></div><div style="position:absolute;left:885px;top:3px;width:2px;height:59px;background:#e5e5e5"></div><div class="t" style="left:781px;top:18px;width:105px;height:40px;line-height:40px;text-align:center">误差</div><div class="t" style="left:781px;top:68px;width:105px;height:40px;line-height:40px;text-align:center"><span class="a">-<span class="z">0</span>.<span class="z">4</span>%</span></div><div class="t" style="left:781px;top:108px;width:105px;height:40px;line-height:40px;text-align:center"><span class="a">-<span class="z">0</span>.<span class="z">4</span>%</span></div><div class="t" style="left:781px;top:148px;width:105px;height:40px;line-height:40px;text-align:center"><span class="a">-<span class="z">0</span>.<span class="z">4</span>%</span></div><div class="t" style="left:781px;top:188px;width:105px;height:40px;line-height:40px;text-align:center"><span class="a">-<span class="z">0</span>.<span class="z">4</span>%</span></div><div class="t" style="left:781px;top:228px;width:105px;height:40px;line-height:40px;text-align:center"><span class="a">-<span class="z">0</span>.<span class="z">4</span>%</span></div><div class="t" style="left:781px;top:268px;width:105px;height:40px;line-height:40px;text-align:center"><span class="a">-<span class="z">0</span>.<span class="z">4</span>%</span></div><div class="t" style="left:781px;top:308px;width:105px;height:40px;line-height:40px;text-align:center"><span class="a">-<span class="z">0</span>.<span class="z">4</span>%</span></div><div style="position:absolute;left:1073px;top:63px;width:2px;height:260px;background:#f0f0f0"></div><div style="position:absolute;left:1073px;top:3px;width:2px;height:59px;background:#e5e5e5"></div><div class="t" style="left:886px;top:18px;width:188px;height:40px;line-height:40px;text-align:center">实际波特率</div><div class="t" style="left:886px;top:68px;width:188px;height:40px;line-height:40px;text-align:center"><span class="a"><span class="z">249035</span></span></div><div class="t" style="left:886px;top:108px;width:188px;height:40px;line-height:40px;text-align:center"><span class="a"><span class="z">249035</span></span></div><div class="t" style="left:886px;top:148px;width:188px;height:40px;line-height:40px;text-align:center"><span class="a"><span class="z">249035</span></span></div><div class="t" style="left:886px;top:188px;width:188px;height:40px;line-height:40px;text-align:center"><span class="a"><span class="z">249035</span></span></div><div class="t" style="left:886px;top:228px;width:188px;height:40px;line-height:40px;text-align:center"><span class="a"><span class="z">249035</span></span></div><div class="t" style="left:886px;top:268px;width:188px;height:40px;line-height:40px;text-align:center"><span class="a"><span class="z">249035</span></span></div><div class="t" style="left:886px;top:308px;width:188px;height:40px;line-height:40px;text-align:center"><span class="a"><span class="z">249035</span></span></div><div style="position:absolute;left:1905px;top:3px;width:42px;height:318px;background:#f0f0f0"></div><div style="position:absolute;left:1923px;top:45px;width:5px;height:200px;background:#8b8b8b;border-radius:1px"></div></div>
<div style="position:absolute;left:851px;top:694px;width:1953px;height:3px;background:#c3def4"></div>
<div style="position:absolute;left:851px;top:702px;width:1953px;height:534px;background:#fff;border:2px solid #868b93;border-bottom-color:#f0f0f0;border-right-color:#fff;box-sizing:border-box;overflow:hidden"><div style="position:absolute;left:0;top:0;width:90px;height:530px;background:#f0f0f0"></div><div style="position:absolute;left:105px;top:0;width:1800px;height:39px;background:#bcdaf0"></div><div style="position:absolute;left:1905px;top:0;width:42px;height:530px;background:#f0f0f0"></div><div style="position:absolute;left:1924px;top:175px;width:5px;height:294px;background:#8b8b8b;border-radius:1px"></div><div class="ln" style="top:-1px">7</div><div class="t" style="left:104px;top:4px;height:40px;line-height:40px"><span class="k"><span class="a">void</span></span><span class="a"> CanWriteReg(</span><span class="k"><span class="a">unsigned char</span></span><span class="a"> addr, </span><span class="k"><span class="a">unsigned char</span></span><span class="a"> dat)</span></div><div class="ln" style="top:39px">8</div><div class="t" style="left:104px;top:44px;height:40px;line-height:40px"><span class="a">{</span></div><div class="ln" style="top:79px">9</div><div class="t" style="left:104px;top:84px;height:40px;line-height:40px"><span class="a">    CANAR = addr;</span></div><div class="ln" style="top:119px">10</div><div class="t" style="left:104px;top:124px;height:40px;line-height:40px"><span class="a">    CANDR = dat;</span></div><div class="ln" style="top:159px">11</div><div class="t" style="left:104px;top:164px;height:40px;line-height:40px"><span class="a">}</span></div><div class="ln" style="top:199px">12</div><div class="t" style="left:104px;top:204px;height:40px;line-height:40px"></div><div class="ln" style="top:239px">13</div><div class="t" style="left:104px;top:244px;height:40px;line-height:40px"><span class="k"><span class="a">void</span></span><span class="a"> CanSetBaudrate(</span><span class="k"><span class="a">void</span></span><span class="a">)       </span><span class="c"><span class="a">//<span class="z">250</span>Kbps@<span class="z">33</span>.<span class="z">8688</span>MHz</span></span></div><div class="ln" style="top:279px">14</div><div class="t" style="left:104px;top:284px;height:40px;line-height:40px"><span class="a">{</span></div><div class="ln" style="top:319px">15</div><div class="t" style="left:104px;top:324px;height:40px;line-height:40px"><span class="a">    CanWriteReg(MR, <span class="z">0</span>x<span class="z">04</span>);      </span><span class="c"><span class="a">//</span>使能<span class="a">Reset</span>模式</span></div><div class="ln" style="top:359px">16</div><div class="t" style="left:104px;top:364px;height:40px;line-height:40px"><span class="a">    CanWriteReg(BTR<span class="z">0</span>, <span class="z">0</span>x<span class="z">03</span>);    </span><span class="c"><span class="a">//SJW(<span class="z">0</span>), BRP(<span class="z">3</span>)</span></span></div><div class="ln" style="top:399px">17</div><div class="t" style="left:104px;top:404px;height:40px;line-height:40px"><span class="a">    CanWriteReg(BTR<span class="z">1</span>, <span class="z">0</span>x<span class="z">1</span>d);    </span><span class="c"><span class="a">//SAM(<span class="z">0</span>), TSG<span class="z">2</span>(<span class="z">1</span>), TSG<span class="z">1</span>(<span class="z">13</span>)</span></span></div><div class="ln" style="top:439px">18</div><div class="t" style="left:104px;top:444px;height:40px;line-height:40px"><span class="a">    CanWriteReg(MR, <span class="z">0</span>x<span class="z">00</span>);      </span><span class="c"><span class="a">//</span>退出<span class="a">Reset</span>模式</span></div><div class="ln" style="top:479px">19</div><div class="t" style="left:104px;top:484px;height:40px;line-height:40px"><span class="a">}</span></div></div>
<div class="btn def" style="left:853px;top:1252px;width:194px;height:56px;line-height:61px">生成<span class="a">C</span>代码</div>
<div class="btn " style="left:1066px;top:1252px;width:193px;height:56px;line-height:61px">生成<span class="a">ASM</span>代码</div>
<div class="btn " style="left:1278px;top:1252px;width:193px;height:56px;line-height:61px">复制代码</div>
<div style="position:absolute;left:812px;top:1356px;width:2028px;height:2px;background:#b9d8f2"></div>
<div style="position:absolute;left:812px;top:1369px;width:2026px;height:349px;background:#fff;border-top:2px solid #9a9a9a;border-left:2px solid #9a9a9a;box-sizing:border-box"></div>
<div style="position:absolute;left:815px;top:1739px;width:2023px;height:47px;background:#f0f0f0;border:2px solid #fcfcfc;border-bottom:3px solid #808080;box-sizing:border-box"></div>
<div class="btn " style="left:817px;top:1803px;width:303px;height:54px;line-height:59px">远程现场升级<span class="a">APP</span>发布</div>
<div class="btn " style="left:1136px;top:1803px;width:180px;height:54px;line-height:59px">发布<span class="a">APP</span>帮助</div>
<div class="btn " style="left:1331px;top:1803px;width:230px;height:54px;line-height:59px">读取本机硬盘号</div>
<div class="btn " style="left:1576px;top:1803px;width:80px;height:54px;line-height:59px">清除</div>
<div class="btn " style="left:1671px;top:1803px;width:155px;height:54px;line-height:59px">动态信息</div>
<div class="cb on" style="left:2365px;top:1811px"><svg width="32" height="32" viewBox="0 0 32 32"><path d="M8.5 17.5 L13.8 22.3 L24.5 11.5" fill="none" stroke="#fff" stroke-opacity=".8" stroke-width="2.6" stroke-linecap="round" stroke-linejoin="round"/></svg></div>
<div class="t " style="left:2403px;top:1814px;height:40px;line-height:40px;">提示音</div>
<div class="t " style="left:2518px;top:1814px;height:40px;line-height:40px;">成功计数</div>
<div style="position:absolute;left:2648px;top:1806px;width:95px;height:47px;background:#f0f0f0;border:2px solid #fcfcfc;border-bottom:3px solid #808080;box-sizing:border-box"></div>
<div class="t" style="left:2644px;top:1811px;width:95px;height:40px;line-height:40px;text-align:center"><span class="a"><span class="z">82</span></span></div>
<div class="btn " style="left:2757px;top:1807px;width:79px;height:44px;line-height:49px">清零</div>
</body></html>
